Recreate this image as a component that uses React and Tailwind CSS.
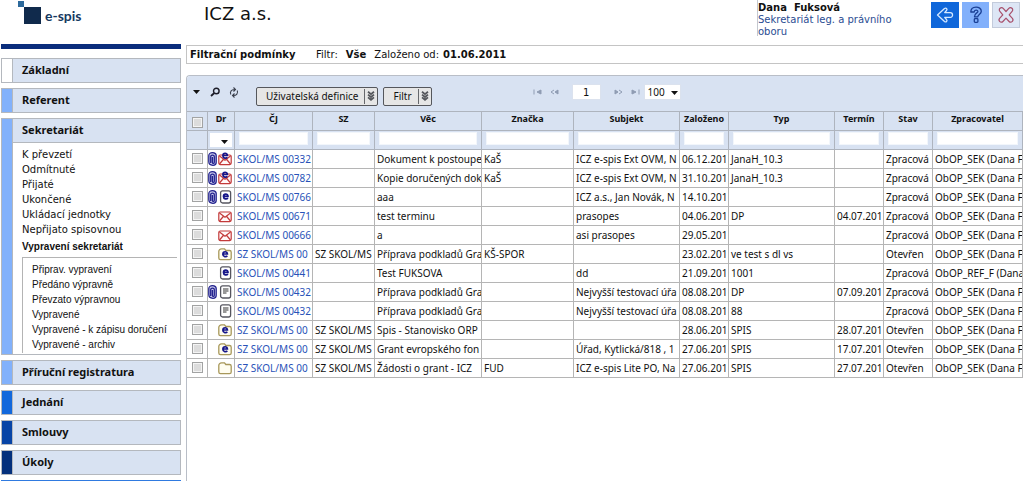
import React, { useState } from 'react';
import clsx from 'clsx';

const SEKRETARIAT_LINKS = [
  'K převzetí',
  'Odmítnuté',
  'Přijaté',
  'Ukončené',
  'Ukládací jednotky',
  'Nepřijato spisovnou'
];

const VYPRAVENI_LINKS = [
  'Připrav. vypravení',
  'Předáno výpravně',
  'Převzato výpravnou',
  'Vypravené',
  'Vypravené - k zápisu doručení',
  'Vypravené - archiv'
];

const COLUMNS = [
  { key: 'cj', label: 'ČJ', width: 'w-[78px]' },
  { key: 'sz', label: 'SZ', width: 'w-[62px]' },
  { key: 'vec', label: 'Věc', width: 'w-[107px]' },
  { key: 'znacka', label: 'Značka', width: 'w-[92px]' },
  { key: 'subjekt', label: 'Subjekt', width: 'w-[106px]' },
  { key: 'zalozeno', label: 'Založeno', width: 'w-[49px]' },
  { key: 'typ', label: 'Typ', width: 'w-[106px]' },
  { key: 'termin', label: 'Termín', width: 'w-[49px]' },
  { key: 'stav', label: 'Stav', width: 'w-[49px]' },
  { key: 'zpracovatel', label: 'Zpracovatel', width: '' }
];

const SEK = 'ObOP_SEK (Dana F';

const ROWS = [
  { clip: true, icon: 'emailMail', cj: 'SKOL/MS 00332', vec: 'Dokument k postoupe', znacka: 'KaŠ', subjekt: 'ICZ e-spis Ext OVM, N', zalozeno: '06.12.201', typ: 'JanaH_10.3', stav: 'Zpracová', zpracovatel: SEK },
  { clip: true, icon: 'emailMail', cj: 'SKOL/MS 00782', vec: 'Kopie doručených dok', znacka: 'KaŠ', subjekt: 'ICZ e-spis Ext OVM, N', zalozeno: '31.10.201', typ: 'JanaH_10.3', stav: 'Zpracová', zpracovatel: SEK },
  { clip: true, icon: 'edoc', cj: 'SKOL/MS 00766', vec: 'aaa', subjekt: 'ICZ a.s., Jan Novák, N', zalozeno: '14.10.201', stav: 'Zpracová', zpracovatel: SEK },
  { icon: 'mail', cj: 'SKOL/MS 00671', vec: 'test terminu', subjekt: 'prasopes', zalozeno: '04.06.201', typ: 'DP', termin: '04.07.201', stav: 'Zpracová', zpracovatel: SEK },
  { icon: 'mail', cj: 'SKOL/MS 00666', vec: 'a', subjekt: 'asi prasopes', zalozeno: '29.05.201', stav: 'Zpracová', zpracovatel: SEK },
  { icon: 'efolder', cj: 'SZ SKOL/MS 00', sz: 'SZ SKOL/MS', vec: 'Příprava podkladů Gra', znacka: 'KŠ-SPOR', zalozeno: '23.02.201', typ: 've test s dl vs', stav: 'Otevřen', zpracovatel: SEK },
  { icon: 'edoc', cj: 'SKOL/MS 00441', vec: 'Test FUKSOVA', subjekt: 'dd', zalozeno: '21.09.201', typ: '1001', stav: 'Zpracová', zpracovatel: 'ObOP_REF_F (Dana' },
  { clip: true, icon: 'doc', cj: 'SKOL/MS 00432', vec: 'Příprava podkladů Gra', subjekt: 'Nejvyšší testovací úřa', zalozeno: '08.08.201', typ: 'DP', termin: '07.09.201', stav: 'Zpracová', zpracovatel: SEK },
  { icon: 'doc', cj: 'SKOL/MS 00432', vec: 'Příprava podkladů Gra', subjekt: 'Nejvyšší testovací úřa', zalozeno: '08.08.201', typ: '88', stav: 'Zpracová', zpracovatel: SEK },
  { icon: 'efolder', cj: 'SZ SKOL/MS 00', sz: 'SZ SKOL/MS', vec: 'Spis - Stanovisko ORP', zalozeno: '28.06.201', typ: 'SPIS', termin: '28.07.201', stav: 'Otevřen', zpracovatel: SEK },
  { icon: 'efolder', cj: 'SZ SKOL/MS 00', sz: 'SZ SKOL/MS', vec: 'Grant evropského fon', subjekt: 'Úřad, Kytlická/818 , 1', zalozeno: '27.06.201', typ: 'SPIS', termin: '17.07.201', stav: 'Otevřen', zpracovatel: SEK },
  { icon: 'folder', cj: 'SZ SKOL/MS 00', sz: 'SZ SKOL/MS', vec: 'Žádosti o grant - ICZ', znacka: 'FUD', subjekt: 'ICZ e-spis Lite PO, Na', zalozeno: '27.06.201', typ: 'SPIS', termin: '27.07.201', stav: 'Otevřen', zpracovatel: SEK }
];

const ClipIcon = () => (
  <svg width="9" height="14" viewBox="0 0 9 14" fill="none" stroke="#23238e" strokeWidth="1.300">
    <path d="M.8 9.5V3.6C.8 1.8 2.400.7 4.400.7s3.800 1.100 3.800 2.900v6.600c0 2-1.500 3.100-3.300 3.100C2 13.300.8 12 .8 9.500" fill="#c9c9ec" />
    <path d="M2.700 11V4.400c0-1.800 3.600-1.800 3.600 0v5.800c0 1.600-1.900 1.600-1.900 0V5" />
  </svg>
);

// letter "e" shared by electronic documents and folders
const LetterE = ({ y = 0 }) => (
  <path d={`M5 ${y + 5.5}h4.400c0-3-4.500-3-4.500 .2 0 3 3.400 2.900 4.400 1.500`} fill="none" stroke="#16168a" strokeWidth="1.700" />
);

const RowIcon = ({ type }) => (
  <svg width="14" height="14" viewBox="0 0 14 14" fill="none">
    {(type === 'mail' || type === 'emailMail') && (
      <g stroke="#c33a3a" strokeWidth="1.200">
        <rect x=".8" y="3" width="12.400" height="9.600" rx="1.500" fill="#fff8f8" />
        <path d="M1.500 4l5.500 4.200L12.500 4M1.500 12l3.800-4.500M12.500 12L8.700 7.500" />
      </g>
    )}
    {type === 'emailMail' && <LetterE y={-2} />}
    {(type === 'edoc' || type === 'doc') && (
      <rect x="2.600" y=".8" width="10" height="12.200" rx="2" fill="#fff" stroke="#55555f" strokeWidth="1.300" />
    )}
    {type === 'edoc' && <g transform="translate(.6 .8)"><LetterE /></g>}
    {type === 'doc' && <path d="M5 4h5.500M5 6h5.500M5 8h3.500" stroke="#333" strokeWidth="1.200" />}
    {(type === 'folder' || type === 'efolder') && (
      <path d="M.8 11V4.500C.8 3 2 1.800 3.500 1.800h3l1.300 1.700h3.700c1 0 1.700.7 1.700 1.700V11c0 1-.7 1.700-1.700 1.700h-9C1.500 12.700.8 12 .8 11z" fill="#fffdf0" stroke="#a8985a" strokeWidth="1.300" />
    )}
    {type === 'efolder' && <g transform="translate(0 1.500)"><LetterE /></g>}
  </svg>
);

const SidebarSection = ({ title, barClass, children }) => (
  <section className="flex border border-[#b4b8be]">
    <div className={clsx('w-[11px] shrink-0 border-r border-[#b4b8be]', barClass)} />
    <div className="flex-1 min-w-0">
      <h2 className="h-[23px] pl-[9px] bg-[#d8e2f2] text-[11px] leading-[22px] font-bold font-['Noto_Sans',sans-serif]">
        <a href="#">{title}</a>
      </h2>
      {children}
    </div>
  </section>
);

const SplitButton = ({ children }) => (
  <button type="button" className="flex h-[19px] items-center rounded-[2px] border border-[#55575c] bg-[#e6e6e6] pl-[9px] text-[10px] leading-4 font-['Noto_Sans',sans-serif]">
    <span className="pr-1.5">{children}</span>
    <span className="flex h-[15px] w-[13px] items-center justify-center border-l border-[#66686c]">
      <svg width="8" height="10" viewBox="0 0 8 10" fill="none" stroke="#55575c" strokeWidth="1.800">
        <path d="M1 .8l3 2.400 3-2.400M1 3.600l3 2.400 3-2.400M1 6.400l3 2.400 3-2.400" />
      </svg>
    </span>
  </button>
);

const Caret = ({ className }) => (
  <svg className={className} width="7" height="4" viewBox="0 0 7 4"><path d="M0 0h7L3.500 4z" fill="#111" /></svg>
);

const PagerButton = ({ label, children }) => (
  <button type="button" aria-label={label} className="text-[#8f9cb3]">
    <svg width="9" height="6" viewBox="0 0 9 6" fill="currentColor" stroke="currentColor">{children}</svg>
  </button>
);

const Checkbox = ({ label, checked, onChange }) => (
  <input
    type="checkbox"
    aria-label={label}
    checked={checked}
    onChange={onChange}
    className="block mx-auto h-[11px] w-[11px] appearance-none border border-[#a2a3a3] bg-[#dcdcdc] shadow-[inset_0_0_0_1px_#f4f4f4] checked:bg-[#3b6fd0]"
  />
);

const Sidebar = () => (
  <aside className="w-[181px] shrink-0 pl-px">
    <div className="flex h-11 items-start pl-[17px]">
      <svg width="23" height="25" viewBox="0 0 23 25">
        <rect x="0" y="1" width="6" height="6" fill="#2d6a9c" />
        <rect x="6" y="7" width="17" height="17" fill="#102a4c" />
      </svg>
      <span className="pl-1 pt-1.5 text-[14px] leading-5 font-bold text-[#17395f] font-['Lato',sans-serif]">e-spis</span>
    </div>
    <div className="mb-[9px] h-[5px] bg-[#0a2d7c]" />
    <nav className="flex flex-col gap-[5px]">
      <SidebarSection title="Základní" barClass="bg-white" />
      <SidebarSection title="Referent" barClass="bg-[#82b1fb]" />
      <SidebarSection title="Sekretariát" barClass="bg-[#82b1fb]">
        <div className="border-t border-[#b4b8be] pt-1 pl-[9px] pr-[3px] pb-px">
          <ul className="text-[10px] leading-[15px]">
            {SEKRETARIAT_LINKS.map(link => (
              <li key={link}><a href="#">{link}</a></li>
            ))}
          </ul>
          <div className="font-['Liberation_Sans',Arial,sans-serif] text-[10px] leading-[15px]">
            <a href="#" className="block pt-0.5 pb-[3px] font-bold">Vypravení sekretariát</a>
            <ul className="border-t border-l border-[#b4b4b4] pt-1 pb-px pl-[9px] whitespace-nowrap">
              {VYPRAVENI_LINKS.map(link => (
                <li key={link}><a href="#">{link}</a></li>
              ))}
            </ul>
          </div>
        </div>
      </SidebarSection>
      <SidebarSection title="Příruční registratura" barClass="bg-[#82b1fb]" />
      <SidebarSection title="Jednání" barClass="bg-[#1268dc]" />
      <SidebarSection title="Smlouvy" barClass="bg-[#0744a6]" />
      <SidebarSection title="Úkoly" barClass="bg-[#04307c]" />
      <div className="h-px bg-[#2f7ae0]" />
    </nav>
  </aside>
);

const Header = () => (
  <header className="flex h-[45px] items-start justify-between">
    <h1 className="pl-[18px] text-[18px] leading-7">ICZ a.s.</h1>
    <div className="flex">
      <div className="h-9 w-[174px] border-l border-[#c4c8d0] pt-0.5 text-[10px] leading-3">
        <div className="font-bold">Dana&nbsp; Fuksová</div>
        <div className="w-[140px] text-[#2a4c92]">Sekretariát leg. a právního oboru</div>
      </div>
      <div className="flex gap-[3px] pt-0.5 pr-[3px]">
        <button type="button" aria-label="Zpět" className="flex h-[26px] w-7 items-center justify-center bg-[#1067da]">
          <svg width="18" height="18" viewBox="0 0 18 18" fill="none" stroke="#d4e8ff" strokeWidth="1.300" strokeLinejoin="round">
            <path d="M1.500 9l7-6.500c1.500-1.200 3.300.6 2 2L8.700 6.600h5.600c3 0 3 4.800 0 4.800H8.700l1.800 2.100c1.300 1.400-.5 3.200-2 2z" />
          </svg>
        </button>
        <button type="button" aria-label="Nápověda" className="flex h-[26px] w-[27px] items-center justify-center bg-[#82b0fb]">
          <svg width="16" height="18" viewBox="0 0 16 18" fill="none" stroke="#1a3f94" strokeWidth="1.300" strokeLinejoin="round">
            <path d="M2.800 6C2.800-.5 13.300-.3 13.300 5.300c0 3-3.500 3.400-3.500 5.500H6.500c0-3.800 3.400-3.800 3.400-5.400 0-1.700-3.600-1.700-3.700.6z" />
            <rect x="6.300" y="12.700" width="3.600" height="3.600" rx=".8" />
          </svg>
        </button>
        <button type="button" aria-label="Zavřít" className="flex h-[26px] w-7 items-center justify-center border border-[#c3cbdb] bg-[#dde6f5]">
          <svg width="18" height="18" viewBox="0 0 18 18" fill="none" stroke="#a8506c" strokeWidth="1.200" strokeLinejoin="round">
            <path d="M9 5.500l2.800-3.200c2-2.200 5.300 1 3.300 3L12.200 8.800l3.200 3.600c1.800 2.200-1.300 5.200-3.300 3.100L9 12.200l-3.100 3.300c-2 2.100-5.100-.9-3.300-3.100l3.200-3.600-2.900-3.500c-2-2 1.300-5.200 3.300-3z" />
          </svg>
        </button>
      </div>
    </div>
  </header>
);

const Toolbar = () => {
  const [page, setPage] = useState('1');
  const [pageSize, setPageSize] = useState('100');

  return (
    <div className="flex h-[35px] items-center pl-1.5 pb-[3px]">
      <button type="button" aria-label="Menu"><Caret /></button>
      <button type="button" aria-label="Hledat" className="ml-2.5">
        <svg width="11" height="10" viewBox="0 0 11 10" fill="none" stroke="#1c1c28" strokeWidth="1.400">
          <circle cx="6.300" cy="4" r="2.800" />
          <path d="M4.300 6L1 9" strokeWidth="1.800" />
        </svg>
      </button>
      <button type="button" aria-label="Obnovit" className="ml-2">
        <svg width="10" height="11" viewBox="0 0 10 11" fill="none" stroke="#3a3f4c" strokeWidth="1.100">
          <path d="M1.800 7.500C.6 4.800 2.500 2.300 5.800 2.500M4.500.5l2 2-2 2M8.200 3.500c1.200 2.700-.7 5.200-4 5M5.500 10.500l-2-2 2-2" />
        </svg>
      </button>
      <div className="ml-[17px] mt-2 flex gap-[5px]">
        <SplitButton>Uživatelská definice</SplitButton>
        <SplitButton>Filtr</SplitButton>
      </div>
      <div className="ml-[101px] flex items-center">
        <div className="flex gap-2">
          <PagerButton label="První stránka"><path d="M1 .5v5" /><path d="M8 1v4L4 3z" /></PagerButton>
          <PagerButton label="Předchozí stránka"><path d="M4 1L1 3l3 2" fill="none" /><path d="M8 1v4L5 3z" /></PagerButton>
        </div>
        <input
          aria-label="Stránka"
          value={page}
          onChange={(e) => setPage(e.target.value)}
          className="mx-[13px] h-4 w-[29px] border border-[#dbe2ee] bg-white text-center text-[10px] leading-[14px]"
        />
        <div className="flex gap-2">
          <PagerButton label="Další stránka"><path d="M1 1v4l3-2z" /><path d="M5 1l3 2-3 2" fill="none" /></PagerButton>
          <PagerButton label="Poslední stránka"><path d="M1 1v4l4-2z" /><path d="M8 .5v5" /></PagerButton>
        </div>
        <div className="relative ml-1">
          <select
            aria-label="Počet na stránku"
            value={pageSize}
            onChange={(e) => setPageSize(e.target.value)}
            className="block h-4 w-[37px] appearance-none border border-[#dbe2ee] bg-white pl-[3px] text-[10px] leading-[14px] font-['Noto_Sans',sans-serif]"
          >
            <option>50</option>
            <option>100</option>
          </select>
          <Caret className="pointer-events-none absolute right-[3px] top-[7px]" />
        </div>
      </div>
    </div>
  );
};

const HEAD_CELL = 'h-[19px] border-r border-b border-[#aeb4be] p-0';
const CELL = 'h-[19px] overflow-hidden whitespace-nowrap border-r border-b border-[#b5b5b5] p-0 pl-0.5';

const DocumentTable = () => {
  const [selected, setSelected] = useState([]);
  const [filters, setFilters] = useState({});

  const toggleRow = (index) => {
    setSelected(prev => prev.includes(index) ? prev.filter(i => i !== index) : [...prev, index]);
  };

  const toggleAll = () => {
    setSelected(prev => prev.length === ROWS.length ? [] : ROWS.map((_, i) => i));
  };

  return (
    <table className="w-full table-fixed border-separate border-spacing-0 border-t border-[#aeb4be] text-[10px] leading-[18px] font-['Noto_Sans',sans-serif]">
      <colgroup>
        <col className="w-[21px]" />
        <col className="w-[27px]" />
        {COLUMNS.map(col => <col key={col.key} className={col.width} />)}
      </colgroup>
      <thead className="bg-[#d8e2f2]">
        <tr className="text-[9px] leading-[14px]">
          <th className={clsx(HEAD_CELL, 'pt-0.5')}>
            <Checkbox label="Vybrat vše" checked={selected.length === ROWS.length} onChange={toggleAll} />
          </th>
          <th className={clsx(HEAD_CELL, 'pb-1')}>Dr</th>
          {COLUMNS.map(col => (
            <th key={col.key} className={clsx(HEAD_CELL, 'pb-1')}>{col.label}</th>
          ))}
        </tr>
        <tr>
          <td className={HEAD_CELL} />
          <td className={HEAD_CELL}>
            <div className="relative mx-0.5">
              <select aria-label="Filtr Dr" className="block h-[14px] w-full appearance-none bg-white">
                <option value="" />
              </select>
              <Caret className="pointer-events-none absolute right-1 top-[7px]" />
            </div>
          </td>
          {COLUMNS.map(col => (
            <td key={col.key} className={clsx(HEAD_CELL, 'px-1 pb-1')}>
              <input
                aria-label={`Filtr ${col.label}`}
                value={filters[col.key] || ''}
                onChange={(e) => setFilters(prev => ({ ...prev, [col.key]: e.target.value }))}
                className="block h-[13px] w-full border border-[#f2f6fb] bg-white"
              />
            </td>
          ))}
        </tr>
      </thead>
      <tbody>
        {ROWS.map((row, index) => (
          <tr key={index} className={clsx(selected.includes(index) && 'bg-[#eef3fb]')}>
            <td className="h-[19px] border-r border-b border-[#b5b5b5] p-0 pb-0.5">
              <Checkbox label={`Vybrat ${row.cj}`} checked={selected.includes(index)} onChange={() => toggleRow(index)} />
            </td>
            <td className="h-[19px] border-r border-b border-[#b5b5b5] p-0 pr-0.5">
              <div className="flex items-center justify-end gap-px">
                {row.clip && <ClipIcon />}
                <RowIcon type={row.icon} />
              </div>
            </td>
            {COLUMNS.map(col => (
              <td key={col.key} className={CELL}>
                {col.key === 'cj' ? <a href="#" className="text-[#2852b8]">{row.cj}</a> : row[col.key]}
              </td>
            ))}
          </tr>
        ))}
      </tbody>
    </table>
  );
};

const App = () => (
  <div className="flex min-h-screen bg-white text-[#111] font-['DejaVu_Sans',Verdana,sans-serif]">
    <Sidebar />
    <main className="ml-[5px] flex min-w-0 flex-1 flex-col">
      <Header />
      <div className="flex h-[19px] items-center border-y border-l border-[#c4c4c4] pl-[3px] text-[10px] leading-4 whitespace-nowrap">
        <h2 className="w-[126px] font-bold">Filtrační podmínky</h2>
        <span className="mr-2">Filtr:</span>
        <b className="mr-2">Vše</b>
        <span className="mr-1">Založeno od:</span>
        <b>01.06.2011</b>
      </div>
      <div className="mt-[11px] flex-1 rounded-tl-[4px] border-l border-t border-[#b9bec7]">
        <div className="rounded-tl-[3px] bg-[#d8e2f2]">
          <Toolbar />
        </div>
        <DocumentTable />
      </div>
    </main>
  </div>
);

export default App;
